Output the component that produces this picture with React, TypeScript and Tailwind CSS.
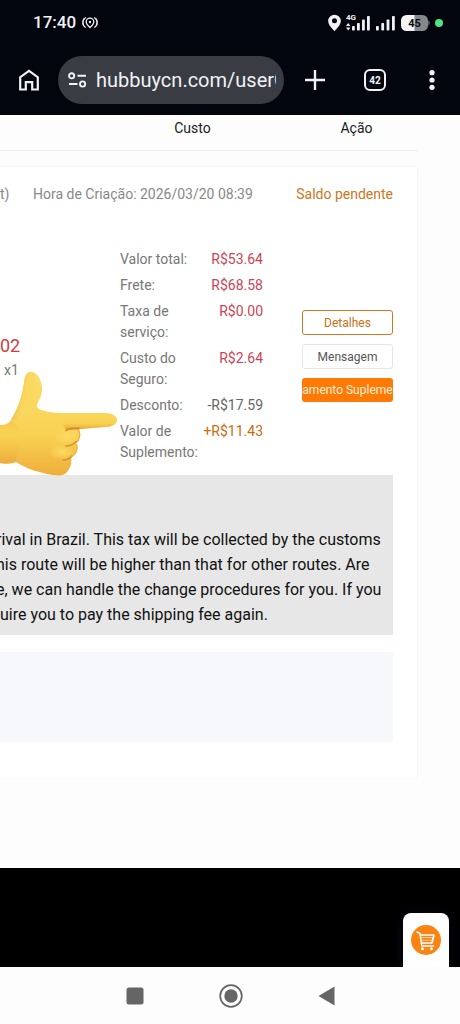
import React from 'react';

interface Cost {
  label: string;
  value: string;
  color: string;
}

const costs: Cost[] = [
  { label: 'Valor total:', value: 'R$53.64', color: 'text-[#cc4453]' },
  { label: 'Frete:', value: 'R$68.58', color: 'text-[#cc4453]' },
  { label: 'Taxa de serviço:', value: 'R$0.00', color: 'text-[#cc4453]' },
  { label: 'Custo do Seguro:', value: 'R$2.64', color: 'text-[#cc4453]' },
  { label: 'Desconto:', value: '-R$17.59', color: 'text-[#666666]' },
  { label: 'Valor de Suplemento:', value: '+R$11.43', color: 'text-[#cc6a0c]' },
];

const StatusBar: React.FC = () => (
  <div className="flex items-center justify-between h-[45px] pl-[33px] pr-[17px]">
    <div className="flex items-center gap-[6px]">
      <span className="text-[17px] font-medium">17:40</span>
      <svg width="16" height="14" viewBox="0 0 16 14" fill="none" stroke="currentColor" strokeWidth="1.3" strokeLinecap="round">
        <path d="M8 11.6C5.6 9.4 4.2 7.9 4.2 6a3.800 3.800 0 0 1 7.600 0c0 1.900-1.400 3.400-3.800 5.600Z" />
        <circle cx="8" cy="6" r="1.2" fill="currentColor" stroke="none" />
        <path d="M3.400 1.800C.2 4 .2 8.800 3.200 11.200M12.600 1.800c3.200 2.200 3.200 7 .2 9.400" />
        <path d="M1.600 2.600c-1.400 2.400-1.400 5.200 0 7.600M14.400 2.600c1.400 2.400 1.400 5.200 0 7.600" strokeWidth=".8" />
      </svg>
    </div>

    <div className="flex items-center gap-[5px]">
      <svg width="13" height="18" viewBox="0 0 14 18" fill="currentColor">
        <path fillRule="evenodd" d="M7 0a6.800 6.800 0 0 0-6.800 6.800C.2 11.500 5 15 7 18c2-3 6.800-6.500 6.800-11.200A6.800 6.800 0 0 0 7 0Zm0 4a2.700 2.700 0 1 1 0 5.400A2.700 2.700 0 0 1 7 4Z" />
      </svg>
      <svg width="25" height="19" viewBox="0 0 25 19" fill="currentColor">
        <text x="0" y="7" fontSize="8" fontWeight="700" fontFamily="Roboto, sans-serif">4G</text>
        <path d="M0 13 2.200 10l2.200 3ZM0 14.500h4.400L2.200 17.500Z" />
        <rect x="6" y="13" width="2.8" height="4.5" rx=".8" />
        <rect x="11" y="10" width="2.8" height="7.5" rx=".8" />
        <rect x="16" y="6.5" width="2.8" height="11" rx=".8" />
        <rect x="21" y="3" width="2.8" height="14.5" rx=".8" />
      </svg>
      <svg width="20" height="19" viewBox="0 0 20 19" fill="currentColor">
        <rect x="0" y="13" width="2.8" height="4.5" rx=".8" />
        <rect x="5.3" y="10" width="2.8" height="7.5" rx=".8" />
        <rect x="10.6" y="6.5" width="2.8" height="11" rx=".8" />
        <rect x="16" y="3" width="2.8" height="14.5" rx=".8" />
      </svg>
      <svg width="29" height="16" viewBox="0 0 29 16">
        <path d="M13 0h8.500A5.500 5.500 0 0 1 27 5.500v5a5.500 5.500 0 0 1-5.500 5.500H13ZM27.400 5.500c1.600.4 1.600 4.600 0 5Z" fill="#86878a" />
        <path d="M13.500 0v16H5.500A5.500 5.500 0 0 1 0 10.500v-5A5.500 5.500 0 0 1 5.500 0Z" fill="#f4f4f5" />
        <text x="13.5" y="12" textAnchor="middle" fontSize="11" fontWeight="700" fontFamily="Roboto, sans-serif" fill="#0a0b10">45</text>
      </svg>
      <span className="w-2 h-2 rounded-full bg-[#4be584]" />
    </div>
  </div>
);

const BrowserBar: React.FC = () => (
  <div className="flex items-center h-[70px] pl-[18px] pr-4">
    <button type="button" aria-label="Home" className="shrink-0">
      <svg width="22" height="24" viewBox="0 0 22 24" fill="none" stroke="currentColor" strokeWidth="2.2">
        <path d="M2.200 21.500V9.200L11 2.800l8.800 6.400v12.300h-5.600v-7.300H7.800v7.300Z" />
      </svg>
    </button>
    <div className="flex flex-1 min-w-0 items-center h-12 ml-[18px] pl-[10px] pr-2 rounded-full bg-[#393c43]">
      <svg className="shrink-0" width="19" height="16" viewBox="0 0 19 16" fill="none" stroke="currentColor" strokeWidth="1.9">
        <circle cx="3.6" cy="3.8" r="2.6" />
        <path d="M9.500 3.800H18M1 12h8.500" />
        <circle cx="14.6" cy="12" r="2.6" />
      </svg>
      <input
        type="text"
        aria-label="URL"
        readOnly
        defaultValue="hubbuycn.com/userCenter"
        className="flex-1 min-w-0 ml-[9px] bg-transparent text-[20px] outline-none"
      />
    </div>
    <button type="button" aria-label="Nova aba" className="shrink-0 ml-[21px]">
      <svg width="20" height="20" viewBox="0 0 20 20" stroke="currentColor" strokeWidth="2.4">
        <path d="M10 0v20M0 10h20" />
      </svg>
    </button>
    <button type="button" className="flex shrink-0 items-center justify-center w-[22px] h-[22px] ml-[39px] border-2 rounded-md text-[10px] font-bold">
      42
    </button>
    <button type="button" aria-label="Menu" className="shrink-0 ml-[43px] mr-[9px]">
      <svg width="6" height="20" viewBox="0 0 6 20" fill="currentColor">
        <circle cx="3" cy="2.7" r="2.6" />
        <circle cx="3" cy="10" r="2.6" />
        <circle cx="3" cy="17.3" r="2.6" />
      </svg>
    </button>
  </div>
);

const PointingHand: React.FC = () => (
  <svg className="absolute left-0 top-[204px]" width="118" height="108" viewBox="0 0 118 108">
    <defs>
      <linearGradient id="palm" x1="0" y1="0" x2="0" y2="1">
        <stop offset="0" stopColor="#fadd69" />
        <stop offset=".6" stopColor="#f9d253" />
        <stop offset="1" stopColor="#eeae3a" />
      </linearGradient>
      <linearGradient id="thumb" x1="0" y1=".3" x2="1" y2=".6">
        <stop offset="0" stopColor="#eeb63e" />
        <stop offset=".45" stopColor="#f9d75f" />
        <stop offset="1" stopColor="#fadb66" stopOpacity="0" />
      </linearGradient>
      <linearGradient id="finger" x1="0" y1="0" x2="0" y2="1">
        <stop offset="0" stopColor="#fad95f" stopOpacity="0" />
        <stop offset=".6" stopColor="#f8ce4c" stopOpacity=".6" />
        <stop offset="1" stopColor="#e3a035" />
      </linearGradient>
      <linearGradient id="wrist" x1="0" y1="0" x2="0" y2="1">
        <stop offset="0" stopColor="#f3bf44" />
        <stop offset=".4" stopColor="#f9d253" stopOpacity=".5" />
        <stop offset="1" stopColor="#e9a437" />
      </linearGradient>
      <radialGradient id="knuckle">
        <stop offset="0" stopColor="#fbdc62" />
        <stop offset="1" stopColor="#fbdc62" stopOpacity="0" />
      </radialGradient>
    </defs>
    <path d="M0 54C5 54 9 53 11 49C17 39 22 27 24 12C25 4 27 1 31 1C37 1 42 9 42 18C42 26 38 30 37 34C37 38 40 39 45 40C52 42 60 42 66 42L105 42C112 42 117 45 117 49C117 53 112 56 105 56L78 58C82 62 80 69 76 72C79 77 76 84 71 86C72 91 71 95 69 98C65 105 61 105 53 104C40 102 27 98 16 91C11 93 5 93 0 92Z" fill="url(#palm)" />
    <path d="M0 54C5 54 9 53 11 49L22 60L16 91C11 93 5 93 0 92Z" fill="url(#wrist)" opacity=".6" />
    <path d="M11 49C17 39 22 27 24 12C25 4 27 1 31 1C37 1 42 9 42 18C42 26 38 30 37 34C33 43 28 50 11 49Z" fill="url(#thumb)" />
    <path d="M66 42L105 42C112 42 117 45 117 49C117 53 112 56 105 56L68 59C62 57 60 47 66 42Z" fill="url(#finger)" />
    <ellipse cx="67" cy="66" rx="13" ry="9" fill="url(#knuckle)" />
    <ellipse cx="62" cy="81" rx="13" ry="8" fill="url(#knuckle)" />
    <path d="M66 59.500C68 56.500 74 57.500 79 57.500" fill="none" stroke="#d38a2b" strokeWidth="1.800" strokeLinecap="round" />
    <path d="M66 75C70 75 74 73 76.500 70.500M63 89C66 89 70 87.500 72 85" fill="none" stroke="#d99230" strokeWidth="1.700" strokeLinecap="round" />
    <path d="M78 58.500C81 62 80 69 76 72M76.500 73C78.500 78 76 84 71 86" fill="none" stroke="#eab140" strokeWidth="1.200" />
  </svg>
);

const OrderCard: React.FC = () => (
  <section className="relative mt-[15px] mr-[42px] pt-4 pb-9 pr-6 bg-white border border-l-0 border-[#f7f7f7] rounded-r">
    <div className="flex items-center leading-[22px]">
      <span className="w-[33px] text-[#888888]">t)</span>
      <span className="flex-1 whitespace-nowrap text-[#888888]">Hora de Criação: 2026/03/20 08:39</span>
      <span className="text-[#cc7722]">Saldo pendente</span>
    </div>

    <div className="flex items-center mt-11">
      <div className="flex-1 mt-1">
        <p className="text-lg leading-6 text-[#cc4040]">02</p>
        <p className="pl-1 leading-6 text-[#777777]">x1</p>
      </div>
      <dl className="flex flex-col gap-[5px] w-[143px] mr-[39px] leading-[21px]">
        {costs.map((cost) => (
          <div key={cost.label} className="flex justify-between">
            <dt className="w-20 text-[#777777]">{cost.label}</dt>
            <dd className={`whitespace-nowrap ${cost.color}`}>{cost.value}</dd>
          </div>
        ))}
      </dl>
      <div className="flex flex-col gap-[9px] w-[91px] text-xs">
        <button type="button" className="h-[25px] border border-[#cc7a22] rounded-[3px] text-[#cc6f16]">
          Detalhes
        </button>
        <button type="button" className="h-[25px] border border-[#e6e6ea] rounded-[3px] text-[#555555]">
          Mensagem
        </button>
        <button type="button" className="flex items-center justify-center h-6 overflow-hidden whitespace-nowrap rounded-[3px] bg-[#ff7a05] text-[#fff0d8]">
          amento Supleme
        </button>
      </div>
    </div>

    <div className="mt-3 pt-[52px] pb-2 overflow-hidden bg-[#e7e7e7] text-base leading-[25px] whitespace-nowrap text-[#111111]">
      <p className="-ml-1">rival in Brazil. This tax will be collected by the customs</p>
      <p className="-ml-1">his route will be higher than that for other routes. Are</p>
      <p className="-ml-1">e, we can handle the change procedures for you. If you</p>
      <p>uire you to pay the shipping fee again.</p>
    </div>

    <div className="h-[90px] mt-[17px] bg-[#f7f8fb]" />

    <PointingHand />
  </section>
);

const NavBar: React.FC = () => (
  <nav className="flex items-center justify-center gap-[75px] h-[57px] bg-[#fdfdfd] text-[#656565]">
    <button type="button" aria-label="Recentes">
      <svg width="18" height="18" viewBox="0 0 18 18" fill="currentColor">
        <rect x=".5" y=".5" width="17" height="17" rx="2.5" />
      </svg>
    </button>
    <button type="button" aria-label="Início">
      <svg width="24" height="24" viewBox="0 0 24 24">
        <circle cx="12" cy="12" r="10.8" fill="none" stroke="currentColor" strokeWidth="1.7" />
        <circle cx="12" cy="12" r="6.7" fill="currentColor" />
      </svg>
    </button>
    <button type="button" aria-label="Voltar">
      <svg width="17" height="20" viewBox="0 0 17 20" fill="currentColor">
        <path d="M16.500.5v19L.5 10Z" />
      </svg>
    </button>
  </nav>
);

const App: React.FC = () => {
  return (
    <div className="flex flex-col min-h-screen overflow-hidden bg-[#fdfdfd] font-['Roboto',sans-serif]">
      <header className="bg-[#02050d] text-[#f1f2f6]">
        <StatusBar />
        <BrowserBar />
      </header>

      <main className="pb-[89px] text-sm">
        <div className="flex mr-[42px] h-9 border-b border-[#ececec] leading-[26px] text-[#1a1a1a]">
          <span className="flex-1" />
          <span className="w-[143px] mr-[39px] text-center">Custo</span>
          <span className="w-[115px] pr-2 text-center">Ação</span>
        </div>
        <OrderCard />
      </main>

      <footer className="flex flex-1 items-end justify-end pr-[11px] bg-black">
        <a href="#carrinho" aria-label="Carrinho" className="flex justify-center w-[46px] h-[54px] pt-3 rounded-t-lg bg-white shadow-[0_0_14px_#07071c]">
          <svg width="30" height="30" viewBox="0 0 30 30">
            <circle cx="15" cy="15" r="15" fill="#fa8412" />
            <g fill="none" stroke="#fff" strokeLinejoin="round" strokeLinecap="round">
              <path d="M6 7l3 1.500 1.800 12.500h11.700" strokeWidth="1.500" />
              <path d="M9.300 10h13.700l-2 8H10.500" strokeWidth="1.700" />
              <path d="M10.500 12.500h11M11 15.200h10" strokeWidth="1" opacity=".6" />
            </g>
            <circle cx="11.5" cy="23.8" r="1.5" fill="#fff" />
            <circle cx="20.5" cy="23.8" r="1.5" fill="#fff" />
          </svg>
        </a>
      </footer>
      <NavBar />
    </div>
  );
};

export default App;
